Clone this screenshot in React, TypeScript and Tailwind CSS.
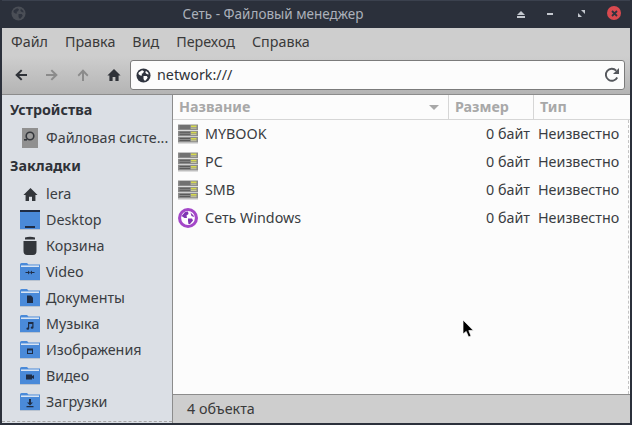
import React from 'react';

const font = { fontFamily: '"Noto Sans", sans-serif' };

function Globe({ size = 16, bg = '#2f343f', fg = '#ffffff' }: { size?: number; bg?: string; fg?: string }) {
    return (
        <svg width={size} height={size} viewBox="0 0 16 16">
            <circle cx="8" cy="8" r="7.5" fill={bg} />
            <path d="M3 4.5 L6.5 2.5 L8.5 3.5 L7.5 5.5 L6 6 L6.5 8 L4.5 8 L2.5 6.5Z" fill={fg} />
            <path d="M8 8.5 L11.5 8.5 L12.5 10.5 L10 13.5 L8.5 13 L8 11Z" fill={fg} />
            <path d="M10.5 3 L13 5 L13.5 7 L11.5 6.5 L10 5Z" fill={fg} />
        </svg>
    );
}

function Arrow({ dir, color }: { dir: 'left' | 'right' | 'up'; color: string }) {
    const rot = dir === 'left' ? 0 : dir === 'right' ? 180 : 90;
    return (
        <svg width="14" height="14" viewBox="0 0 14 14" style={{ transform: `rotate(${rot}deg)` }}>
            <path d="M13 6 H5.2 L8.4 2.8 L7 1.6 L1.2 7 L7 12.4 L8.4 11.2 L5.2 8 H13Z" fill={color} />
        </svg>
    );
}

function Home({ color = '#2f3238', size = 14 }: { color?: string; size?: number }) {
    return (
        <svg width={size} height={size} viewBox="0 0 14 14">
            <path d="M7 1 L13.6 7.4 H11.6 V13 H8.4 V9 H5.6 V13 H2.4 V7.4 H0.4Z" fill={color} />
        </svg>
    );
}

function Folder({ glyph }: { glyph: React.ReactNode }) {
    return (
        <svg width="20" height="20" viewBox="0 0 20 20">
            <path d="M0 2.5 Q0 1 1.5 1 H7 L8.5 2.5 H20 V18 H0Z" fill="#4a8ad9" />
            <rect x="1" y="3.5" width="18" height="1.4" fill="#e8eef6" />
            <rect x="0" y="18" width="20" height="1" fill="#b9c3d0" />
            {glyph}
        </svg>
    );
}

const dark = '#1f2d45';
const glyphs: Record<string, React.ReactNode> = {
    video: <path d="M5.5 10 H8 V8.5 L10 10.5 L8 12.5 V11 H5.5Z M14.5 10 H12 V8.5 L10 10.5 L12 12.5 V11 H14.5Z" fill={dark} />,
    docs: <path d="M7 7.5 H11 L13 9.5 V15 H7Z" fill={dark} />,
    music: <path d="M8 8 H13.5 V13.5 A1.4 1.2 0 1 1 12.3 12.4 V10 H9.2 V14.5 A1.4 1.2 0 1 1 8 13.4Z" fill={dark} />,
    images: <path d="M7 8.5 H13 V14 H7Z M8 10.5 V13 H12 V10.5Z" fill={dark} fillRule="evenodd" />,
    movies: <path d="M6 8.5 H12 V10 L14 9 V13 L12 12 V13.5 H6Z" fill={dark} />,
    downloads: <path d="M9 7 H11 V10.5 H13 L10 13.4 L7 10.5 H9Z M6.5 14 H13.5 V15.2 H6.5Z" fill={dark} />,
};

function Desktop() {
    return (
        <svg width="20" height="20" viewBox="0 0 20 20">
            <rect x="0" y="0" width="20" height="19" fill="#4a8ad9" />
            <rect x="0" y="0" width="20" height="2" fill="#1f2d45" />
            <rect x="5" y="16" width="10" height="2" fill="#1f2d45" />
            <rect x="0" y="19" width="20" height="1" fill="#b9c3d0" />
        </svg>
    );
}

function Trash() {
    return (
        <svg width="20" height="20" viewBox="0 0 20 20">
            <path d="M5 1.5 Q10 0 15 1.5 V3.5 H5Z" fill="#33363b" />
            <path d="M3.5 5 H16.5 V15 Q16.5 19 13 19 H7 Q3.5 19 3.5 15Z" fill="#33363b" />
        </svg>
    );
}

function Disk() {
    return (
        <svg width="16" height="20" viewBox="0 0 16 20">
            <rect x="0" y="0" width="16" height="20" fill="#909090" />
            <circle cx="8" cy="8" r="3.8" fill="#9c9c9c" stroke="#33363b" strokeWidth="1.6" />
            <rect x="2" y="11" width="3" height="1.6" fill="#33363b" />
        </svg>
    );
}

function Server() {
    const row = (y: number) => (
        <g key={y}>
            <rect x="0" y={y} width="20" height="5.6" fill="#8b8b8b" />
            <rect x="1.5" y={y + 1} width="10.5" height="1" fill="#4a4a4a" opacity="0.75" />
            <rect x="1.5" y={y + 3} width="10.5" height="1" fill="#4a4a4a" opacity="0.75" />
            <rect x="13" y={y + 1} width="5.5" height="1.6" fill="#d6d94e" />
            <rect x="13" y={y + 3.2} width="5.5" height="1" fill="#c9c9a0" />
        </g>
    );
    return (
        <svg width="20" height="20" viewBox="0 0 20 20">
            {row(0.5)}
            {row(6.8)}
            {row(13)}
            <rect x="0" y="18.6" width="20" height="1" fill="#c9c9c9" />
        </svg>
    );
}

function NetWin() {
    return (
        <svg width="20" height="20" viewBox="0 0 20 20">
            <circle cx="10" cy="10" r="10" fill="#a447c8" />
            <circle cx="10" cy="10" r="6.9" fill="#ffffff" />
            <path d="M3.6 8 L7 4 L10 3.4 L10.5 6 L8.5 7.5 L9 10 L6.5 10 Z" fill="#7f35b2" />
            <path d="M10 10.5 L14 10.5 L15 12.5 L12 16 L10.5 16 L10 13Z" fill="#7f35b2" />
            <path d="M12.5 4.5 L15.5 7.5 L16 9 L13.5 8 Z" fill="#7f35b2" />
        </svg>
    );
}

const files = [
    { name: 'MYBOOK', icon: <Server /> },
    { name: 'PC', icon: <Server /> },
    { name: 'SMB', icon: <Server /> },
    { name: 'Сеть Windows', icon: <NetWin /> },
];

const bookmarks = [
    { name: 'lera', icon: <Home size={15} color="#33363b" /> },
    { name: 'Desktop', icon: <Desktop /> },
    { name: 'Корзина', icon: <Trash /> },
    { name: 'Video', icon: <Folder glyph={glyphs.video} /> },
    { name: 'Документы', icon: <Folder glyph={glyphs.docs} /> },
    { name: 'Музыка', icon: <Folder glyph={glyphs.music} /> },
    { name: 'Изображения', icon: <Folder glyph={glyphs.images} /> },
    { name: 'Видео', icon: <Folder glyph={glyphs.movies} /> },
    { name: 'Загрузки', icon: <Folder glyph={glyphs.downloads} /> },
];

function SideItem({ icon, name }: { icon: React.ReactNode; name: string }) {
    return (
        <div className="h-[26px] flex items-center pl-[18px]">
            <div className="w-[20px] h-[20px] flex items-center justify-center">{icon}</div>
            <span className="ml-[6px] text-[14.3px] text-[#3a3d42] whitespace-nowrap">{name}</span>
        </div>
    );
}

export default function App() {
    return (
        <div className="relative w-[632px] h-[425px] overflow-hidden bg-[#2b303b] px-[2px] pb-[2px] flex flex-col" style={font}>
            {/* title bar */}
            <div className="h-[28px] flex items-center shrink-0 border-t border-[#3b414e] relative">
                <div className="absolute left-[9px] top-[5px]"><Globe size={15} bg="#4a4e56" fg="#2f343f" /></div>
                <div className="w-[542px] text-center text-[13.5px] text-[#abb0ba]">Сеть - Файловый менеджер</div>
                <div className="absolute left-[515px] top-[10px] flex flex-col gap-[1px]">
                    <div className="w-0 h-0 border-l-[4px] border-r-[4px] border-b-[4px] border-l-transparent border-r-transparent border-b-[#c4c8cf]" />
                    <div className="w-[8px] h-[2px] bg-[#c4c8cf]" />
                </div>
                <div className="absolute left-[545px] top-[12px] w-[6px] h-[2px] bg-[#c4c8cf]" />
                <svg className="absolute left-[576px] top-[9px]" width="7" height="7" viewBox="0 0 7 7">
                    <path d="M7 0 V4 L3 0Z M0 7 V3 L4 7Z" fill="#c4c8cf" />
                </svg>
                <div className="absolute left-[605px] top-[5px] w-[14px] h-[14px] rounded-full bg-[#d9494f] flex items-center justify-center">
                    <svg width="7" height="7" viewBox="0 0 7 7">
                        <path d="M1 1 L6 6 M6 1 L1 6" stroke="#2f343f" strokeWidth="1.8" />
                    </svg>
                </div>
            </div>

            {/* menu bar */}
            <div className="h-[28px] shrink-0 bg-[#cecece] flex items-center gap-[17px] pl-[9px] text-[14.3px] text-[#3a3a3a]">
                <span>Файл</span>
                <span>Правка</span>
                <span>Вид</span>
                <span>Переход</span>
                <span>Справка</span>
            </div>

            {/* toolbar */}
            <div className="h-[39px] shrink-0 flex items-start pt-[4px] bg-gradient-to-b from-[#cecece] to-[#b4b4b4] border-b border-[#8c8c8c]">
                <div className="flex items-center h-[30px] pl-[12px] gap-[17px]">
                    <Arrow dir="left" color="#2f3238" />
                    <Arrow dir="right" color="#8b8b8b" />
                    <Arrow dir="up" color="#8b8b8b" />
                    <Home />
                </div>
                <div className="ml-[9px] w-[495px] h-[30px] bg-[#fcfcfc] border border-[#7b7b7b] rounded-[3px] flex items-center pl-[5px] pr-[4px]">
                    <Globe size={15} />
                    <span className="ml-[6px] text-[14.3px] text-[#2f3238]">network:///</span>
                    <svg className="ml-auto" width="16" height="16" viewBox="0 0 16 16">
                        <path d="M13.2 10.5 A6 6 0 1 1 12.2 3.6" fill="none" stroke="#55585d" strokeWidth="1.9" />
                        <path d="M15 1 V7 H9Z" fill="#55585d" />
                    </svg>
                </div>
            </div>

            {/* body */}
            <div className="flex-1 flex min-h-0">
                <div className="w-[170px] shrink-0 bg-[#dbdfe5] relative overflow-hidden">
                    <div className="h-[30px] flex items-center pl-[8px] text-[14.3px] font-bold text-[#2f3238]">Устройства</div>
                    <SideItem icon={<Disk />} name="Файловая систе..." />
                    <div className="h-[30px] flex items-center pl-[8px] text-[14.3px] font-bold text-[#2f3238]">Закладки</div>
                    {bookmarks.map((b) => (
                        <SideItem key={b.name} icon={b.icon} name={b.name} />
                    ))}
                    <div className="absolute left-0 right-0 bottom-[1px] border-b border-dashed border-[#a8a8a8]" />
                </div>

                <div className="flex-1 min-w-0 flex flex-col border-l border-[#8c8c8c] bg-[#fcfcfc]">
                    <div className="h-[25px] shrink-0 flex border-b border-[#d6d6d6] text-[14.3px] font-bold text-[#a8a8a8]">
                        <div className="w-[276px] flex items-center justify-between pl-[6px] pr-[9px] border-r border-[#d6d6d6]">
                            <span>Название</span>
                            <div className="w-0 h-0 border-l-[5px] border-r-[5px] border-t-[5px] border-l-transparent border-r-transparent border-t-[#a8a8a8]" />
                        </div>
                        <div className="w-[85px] flex items-center pl-[6px] border-r border-[#d6d6d6]">Размер</div>
                        <div className="flex-1 flex items-center pl-[6px]">Тип</div>
                    </div>
                    <div className="flex-1 min-h-0 relative">
                        {files.map((f) => (
                            <div key={f.name} className="h-[28px] flex items-center text-[14.3px] text-[#3a3d42]">
                                <div className="ml-[5px] w-[20px] h-[20px]">{f.icon}</div>
                                <span className="ml-[7px] w-[191px] whitespace-nowrap">{f.name}</span>
                                <span className="w-[134px] text-right whitespace-nowrap">0 байт</span>
                                <span className="ml-[8px] whitespace-nowrap">Неизвестно</span>
                            </div>
                        ))}
                        <div className="absolute right-[1px] top-0 bottom-0 border-r border-dashed border-[#c4c4c4]" />
                    </div>
                    <div className="h-[29px] shrink-0 bg-[#cecece] border-t border-[#8c8c8c] flex items-center pl-[14px] text-[14.3px] text-[#3a3a3a]">4 объекта</div>
                </div>
            </div>

            {/* mouse pointer */}
            <svg className="absolute left-[462px] top-[319px]" width="13" height="20" viewBox="0 0 13 20">
                <path d="M1 1 V15 L4.2 12.4 L6.6 18 L9 17 L6.8 11.6 H11.4Z" fill="#000000" stroke="#ffffff" strokeWidth="0.7" />
            </svg>
        </div>
    );
}
